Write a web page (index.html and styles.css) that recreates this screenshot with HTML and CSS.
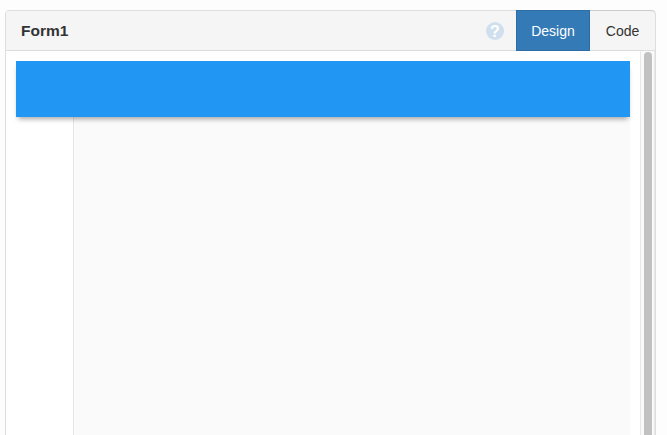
FILE: index.html
```html
<!DOCTYPE html>
<html>
<head>
  <meta charset="utf-8">
  <meta name="viewport" content="width=device-width, initial-scale=1">
  <title>Form1</title>
  <link rel="stylesheet" href="styles.css">
</head>
<body>
  <div class="panel">
    <div class="panel-heading">
      <span class="panel-title">Form1</span>
      <svg class="help-icon" width="18" height="18" viewBox="0 0 18 18">
        <circle cx="9" cy="9" r="9" fill="#d0dfee"/>
        <text x="9" y="14.5" text-anchor="middle" class="help-mark">?</text>
      </svg>
      <div class="tabs">
        <button class="tab active">Design</button>
        <button class="tab">Code</button>
      </div>
    </div>
    <div class="panel-body">
      <div class="stage">
        <div class="canvas-column">
          <div class="canvas"></div>
        </div>
        <div class="app-bar"></div>
      </div>
      <div class="scrollbar">
        <div class="thumb"></div>
      </div>
    </div>
  </div>
</body>
</html>
```

FILE: styles.css
```css
html, body {
  height: 100%;
}

body {
  font-family: "Liberation Sans", Arial, sans-serif;
  margin: 0;
  padding: 10px 11px 0 5px;
  box-sizing: border-box;
  height: 435px;
  overflow: hidden;
  background-color: #fdfdfd;
}

.panel {
  height: 440px;
  background-color: #fff;
  border: 1px solid #ddd;
  border-radius: 4px 4px 0 0;
  display: flex;
  flex-direction: column;
}

.panel-heading {
  height: 39px;
  flex: none;
  display: flex;
  align-items: stretch;
  background-color: #f5f5f5;
  border-bottom: 1px solid #ddd;
  border-radius: 3px 3px 0 0;
}

.panel-title {
  flex: 1;
  padding-left: 15px;
  font-size: 15.5px;
  font-weight: bold;
  line-height: 39px;
  color: #333;
}

.help-icon {
  align-self: center;
  margin-right: 12px;
}

.help-mark {
  font-family: "Liberation Sans", Arial, sans-serif;
  font-size: 16px;
  font-weight: bold;
  fill: #fff;
}

.tabs {
  display: flex;
  margin-top: -1px;
}

.tab {
  font-family: inherit;
  font-size: 14px;
  padding: 0;
  margin: 0;
  height: 41px;
  margin-bottom: -1px;
  width: 65px;
  color: #333;
  background-color: transparent;
  border: none;
  border-top: 1px solid #ccc;
  border-radius: 0 4px 0 0;
}

.tab.active {
  width: 74px;
  color: #fff;
  background-color: #337ab7;
  border: 1px solid #2e6da4;
  border-radius: 0;
}

.panel-body {
  flex: 1;
  display: flex;
  min-height: 0;
}

.stage {
  flex: none;
  width: 624px;
  padding: 10px 0 0 10px;
  box-sizing: border-box;
  position: relative;
}

.canvas-column {
  height: 100%;
  margin-left: 57px;
  width: 557px;
  background-color: #fafafa;
  border-left: 1px solid #e5e5e5;
  box-sizing: border-box;
}

.canvas {
  height: 100%;
}

.app-bar {
  position: absolute;
  top: 10px;
  left: 10px;
  width: 614px;
  height: 56px;
  background-color: #2196f3;
  box-shadow: 0 4px 5px -2px rgba(0, 0, 0, 0.35);
}

.scrollbar {
  flex: none;
  width: 15px;
  margin-left: 10px;
  box-sizing: border-box;
  padding: 1px 2px 0 3px;
  background-color: #fafafa;
  border-left: 1px solid #e8e8e8;
  border-right: 1px solid #e8e8e8;
}

.thumb {
  height: 100%;
  background-color: #c1c1c1;
  border-radius: 4px 4px 0 0;
}
```
